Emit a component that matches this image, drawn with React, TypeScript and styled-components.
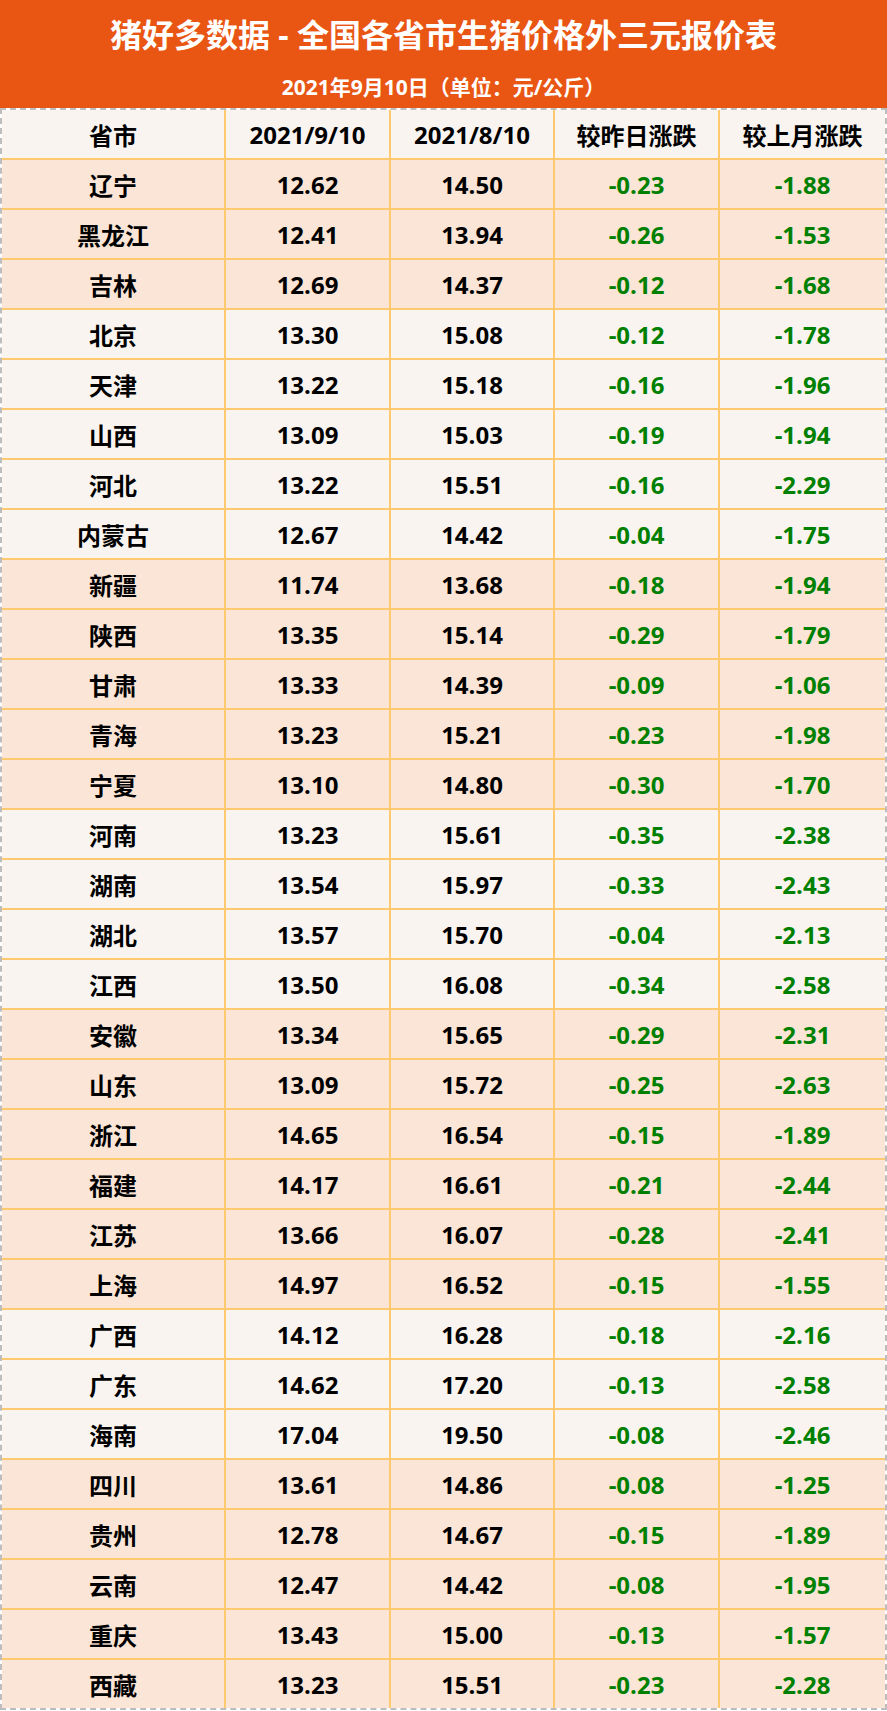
import React, { FC } from 'react';
import styled, { createGlobalStyle } from 'styled-components';

const GlobalStyle = createGlobalStyle`
  html, body {
    margin: 0;
    padding: 0;
    background: #ffffff;
  }
  * {
    box-sizing: border-box;
  }
`;

const FONT = `"Open Sans", "Noto Sans CJK SC", sans-serif`;

const Page = styled.div`
  width: 887px;
  font-family: ${FONT};
  font-weight: 700;
`;

const TitleBar = styled.header`
  height: 108px;
  padding-top: 14px;
  background: #e95513;
  color: #ffffff;
  display: flex;
  flex-direction: column;
  align-items: center;
`;

const Title = styled.h1`
  margin: 0;
  font-size: 32px;
  line-height: 42px;
  font-weight: 700;
`;

const Subtitle = styled.p`
  margin: 17px 0 0 0;
  font-size: 21px;
  line-height: 28px;
`;

const Table = styled.div`
  border: 2px dashed #bdbdbd;
`;

type TRowProps = {
  tone: 'light' | 'pink';
};

const Row = styled.div<TRowProps>`
  display: grid;
  grid-template-columns: 224px 165px 164px 165px 1fr;
  height: 50px;
  background: ${({ tone }) => (tone === 'pink' ? '#fbe5d6' : '#f9f4f0')};
  border-bottom: 2px solid #ffc96f;
  &:last-child {
    border-bottom: none;
    height: 48px;
  }
`;

type TCellProps = {
  green?: boolean;
};

const Cell = styled.div<TCellProps>`
  display: flex;
  align-items: center;
  justify-content: center;
  font-size: 24px;
  color: ${({ green }) => (green ? '#008000' : '#000000')};
  border-right: 2px solid #ffc96f;
  &:last-child {
    border-right: none;
  }
`;

type TRecord = [string, string, string, string, string];

// rows grouped by region, each group shares a background tone
const groups: { tone: 'light' | 'pink'; rows: TRecord[] }[] = [
  {
    tone: 'pink',
    rows: [
      ['辽宁', '12.62', '14.50', '-0.23', '-1.88'],
      ['黑龙江', '12.41', '13.94', '-0.26', '-1.53'],
      ['吉林', '12.69', '14.37', '-0.12', '-1.68'],
    ],
  },
  {
    tone: 'light',
    rows: [
      ['北京', '13.30', '15.08', '-0.12', '-1.78'],
      ['天津', '13.22', '15.18', '-0.16', '-1.96'],
      ['山西', '13.09', '15.03', '-0.19', '-1.94'],
      ['河北', '13.22', '15.51', '-0.16', '-2.29'],
      ['内蒙古', '12.67', '14.42', '-0.04', '-1.75'],
    ],
  },
  {
    tone: 'pink',
    rows: [
      ['新疆', '11.74', '13.68', '-0.18', '-1.94'],
      ['陕西', '13.35', '15.14', '-0.29', '-1.79'],
      ['甘肃', '13.33', '14.39', '-0.09', '-1.06'],
      ['青海', '13.23', '15.21', '-0.23', '-1.98'],
      ['宁夏', '13.10', '14.80', '-0.30', '-1.70'],
    ],
  },
  {
    tone: 'light',
    rows: [
      ['河南', '13.23', '15.61', '-0.35', '-2.38'],
      ['湖南', '13.54', '15.97', '-0.33', '-2.43'],
      ['湖北', '13.57', '15.70', '-0.04', '-2.13'],
      ['江西', '13.50', '16.08', '-0.34', '-2.58'],
    ],
  },
  {
    tone: 'pink',
    rows: [
      ['安徽', '13.34', '15.65', '-0.29', '-2.31'],
      ['山东', '13.09', '15.72', '-0.25', '-2.63'],
      ['浙江', '14.65', '16.54', '-0.15', '-1.89'],
      ['福建', '14.17', '16.61', '-0.21', '-2.44'],
      ['江苏', '13.66', '16.07', '-0.28', '-2.41'],
      ['上海', '14.97', '16.52', '-0.15', '-1.55'],
    ],
  },
  {
    tone: 'light',
    rows: [
      ['广西', '14.12', '16.28', '-0.18', '-2.16'],
      ['广东', '14.62', '17.20', '-0.13', '-2.58'],
      ['海南', '17.04', '19.50', '-0.08', '-2.46'],
    ],
  },
  {
    tone: 'pink',
    rows: [
      ['四川', '13.61', '14.86', '-0.08', '-1.25'],
      ['贵州', '12.78', '14.67', '-0.15', '-1.89'],
      ['云南', '12.47', '14.42', '-0.08', '-1.95'],
      ['重庆', '13.43', '15.00', '-0.13', '-1.57'],
      ['西藏', '13.23', '15.51', '-0.23', '-2.28'],
    ],
  },
];

const headers = ['省市', '2021/9/10', '2021/8/10', '较昨日涨跌', '较上月涨跌'];

const App: FC = () => (
  <Page>
    <GlobalStyle />
    <TitleBar>
      <Title>猪好多数据 - 全国各省市生猪价格外三元报价表</Title>
      <Subtitle>2021年9月10日（单位：元/公斤）</Subtitle>
    </TitleBar>
    <Table>
      <Row tone='light'>
        {headers.map((h) => <Cell key={h}>{h}</Cell>)}
      </Row>
      {groups.flatMap((g) => g.rows.map((r) => (
        <Row key={r[0]} tone={g.tone}>
          <Cell>{r[0]}</Cell>
          <Cell>{r[1]}</Cell>
          <Cell>{r[2]}</Cell>
          <Cell green>{r[3]}</Cell>
          <Cell green>{r[4]}</Cell>
        </Row>
      )))}
    </Table>
  </Page>
);

export default App;
